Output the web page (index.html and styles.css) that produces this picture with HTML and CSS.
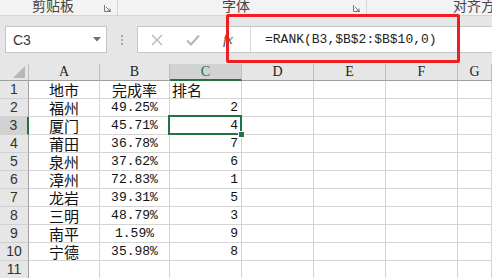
FILE: index.html
```html
<!DOCTYPE html>
<html lang="zh-CN">
<head>
    <meta charset="UTF-8">
    <title>RANK</title>
    <link rel="stylesheet" href="styles.css">
</head>
<body>
    <!-- ribbon group labels -->
    <div class="ribbon">
        <div class="group g-clip">
            <span class="label">剪贴板</span>
            <svg class="launcher" width="7" height="7" viewBox="0 0 7 7"><path d="M0.5 0 V6.5 H7 M2 2 L6 6 M6 3.5 V6 H3.5" fill="none" stroke="#7a7a7a" stroke-width="1"/></svg>
        </div>
        <div class="group g-font">
            <span class="label">字体</span>
            <svg class="launcher" width="7" height="7" viewBox="0 0 7 7"><path d="M0.5 0 V6.5 H7 M2 2 L6 6 M6 3.5 V6 H3.5" fill="none" stroke="#7a7a7a" stroke-width="1"/></svg>
        </div>
        <div class="group g-align">
            <span class="label">对齐方式</span>
        </div>
    </div>

    <!-- formula bar -->
    <div class="fbar">
        <div class="namebox">
            <span>C3</span>
            <svg width="8" height="5" viewBox="0 0 8 5"><path d="M0 0 H8 L4 4.5 Z" fill="#6f6f6f"/></svg>
        </div>
        <div class="grip"><i></i><i></i><i></i></div>
        <div class="formula">
            <div class="btns">
                <svg width="12" height="12" viewBox="0 0 12 12"><path d="M1 1 L11 11 M11 1 L1 11" stroke="#b4b4b4" stroke-width="1.3"/></svg>
                <svg width="14" height="12" viewBox="0 0 14 12"><path d="M1 6.5 L5 10.5 L13 1.5" fill="none" stroke="#b4b4b4" stroke-width="2"/></svg>
                <span class="fx">fx</span>
            </div>
            <div class="ftext">=RANK(B3,$B$2:$B$10,0)</div>
        </div>
        <div class="mark"></div>
    </div>

    <!-- worksheet -->
    <div class="sheet">
        <div class="corner"><svg width="12" height="12" viewBox="0 0 12 12"><path d="M12 0 V12 H0 Z" fill="#b8b8b8"/></svg></div>
        <div class="ch">A</div><div class="ch">B</div><div class="ch active">C</div><div class="ch">D</div><div class="ch">E</div><div class="ch">F</div><div class="ch">G</div>

        <div class="rh">1</div><div class="c ctr zh">地市</div><div class="c ctr zh">完成率</div><div class="c zh">排名</div><div class="c"></div><div class="c"></div><div class="c"></div><div class="c"></div>
        <div class="rh">2</div><div class="c ctr zh">福州</div><div class="c ctr">49.25%</div><div class="c num">2</div><div class="c"></div><div class="c"></div><div class="c"></div><div class="c"></div>
        <div class="rh active">3</div><div class="c ctr zh">厦门</div><div class="c ctr">45.71%</div><div class="c num sel">4</div><div class="c"></div><div class="c"></div><div class="c"></div><div class="c"></div>
        <div class="rh">4</div><div class="c ctr zh">莆田</div><div class="c ctr">36.78%</div><div class="c num">7</div><div class="c"></div><div class="c"></div><div class="c"></div><div class="c"></div>
        <div class="rh">5</div><div class="c ctr zh">泉州</div><div class="c ctr">37.62%</div><div class="c num">6</div><div class="c"></div><div class="c"></div><div class="c"></div><div class="c"></div>
        <div class="rh">6</div><div class="c ctr zh">漳州</div><div class="c ctr">72.83%</div><div class="c num">1</div><div class="c"></div><div class="c"></div><div class="c"></div><div class="c"></div>
        <div class="rh">7</div><div class="c ctr zh">龙岩</div><div class="c ctr">39.31%</div><div class="c num">5</div><div class="c"></div><div class="c"></div><div class="c"></div><div class="c"></div>
        <div class="rh">8</div><div class="c ctr zh">三明</div><div class="c ctr">48.79%</div><div class="c num">3</div><div class="c"></div><div class="c"></div><div class="c"></div><div class="c"></div>
        <div class="rh">9</div><div class="c ctr zh">南平</div><div class="c ctr">1.59%</div><div class="c num">9</div><div class="c"></div><div class="c"></div><div class="c"></div><div class="c"></div>
        <div class="rh">10</div><div class="c ctr zh">宁德</div><div class="c ctr">35.98%</div><div class="c num">8</div><div class="c"></div><div class="c"></div><div class="c"></div><div class="c"></div>
        <div class="rh">11</div><div class="c"></div><div class="c"></div><div class="c"></div><div class="c"></div><div class="c"></div><div class="c"></div><div class="c"></div>
    </div>
</body>
</html>
```

FILE: styles.css
```css
* {
    box-sizing: border-box;
}

body {
    margin: 0;
    width: 492px;
    height: 278px;
    overflow: hidden;
    background: #ffffff;
    font-family: "Noto Sans CJK SC", sans-serif;
}

/* ribbon */
.ribbon {
    display: flex;
    height: 16px;
    background: #f3f3f3;
    border-bottom: 1px solid #d6d6d6;
    overflow: hidden;
}

.group {
    position: relative;
    flex-shrink: 0;
    height: 15px;
    border-right: 1px solid #d6d6d6;
}

.g-clip {
    width: 118px;
}

.g-font {
    width: 249px;
}

.g-align {
    flex: 1;
    min-width: 0;
    overflow: hidden;
    border-right: none;
}

.label {
    display: block;
    margin-top: -2px;
    font-size: 14px;
    line-height: 14px;
    color: #444444;
    white-space: nowrap;
}

.g-clip .label {
    padding-left: 32px;
}

.g-font .label {
    padding-left: 104px;
}

.g-align .label {
    padding-left: 86px;
}

.launcher {
    position: absolute;
    top: 5px;
    right: 6px;
}

/* formula bar */
.fbar {
    position: relative;
    display: flex;
    align-items: center;
    height: 48px;
    padding: 10px 0 11px 5px;
    background: #e6e6e6;
}

.namebox {
    display: flex;
    align-items: center;
    justify-content: space-between;
    width: 102px;
    height: 27px;
    padding: 0 5px 0 7px;
    background: #ffffff;
    border: 1px solid #c6c6c6;
    font-family: "Liberation Sans", sans-serif;
    font-size: 14px;
    color: #3a3a3a;
}

.grip {
    display: flex;
    flex-direction: column;
    gap: 2px;
    width: 30px;
    align-items: center;
}

.grip i {
    width: 2px;
    height: 2px;
    background: #a9a9a9;
}

.formula {
    display: flex;
    flex: 1;
    height: 27px;
    background: #ffffff;
    border: 1px solid #c6c6c6;
    border-right: none;
}

.btns {
    display: flex;
    align-items: center;
    gap: 23px;
    width: 113px;
    padding-left: 13px;
    border-right: 1px solid #d8d8d8;
}

.fx {
    font-family: "Liberation Serif", serif;
    font-style: italic;
    font-size: 15px;
    color: #555555;
    letter-spacing: -1px;
}

.ftext {
    padding-left: 14px;
    font-family: "Liberation Mono", monospace;
    font-size: 13px;
    line-height: 25px;
    color: #222222;
    white-space: nowrap;
}

.mark {
    position: absolute;
    left: 226px;
    top: -2px;
    width: 234px;
    height: 49px;
    border: 3px solid #f01e1e;
    border-radius: 2px;
}

/* worksheet */
.sheet {
    display: grid;
    grid-template-columns: 29px 71px 70px 72px 72px 72px 72px 1fr;
    grid-template-rows: 17px repeat(11, 18px);
    font-family: "Liberation Mono", "Noto Sans CJK SC", monospace;
    font-size: 13px;
    color: #111111;
}

.corner {
    display: flex;
    align-items: flex-end;
    justify-content: flex-end;
    padding: 0 3px 2px 0;
    background: #e6e6e6;
    border-right: 1px solid #bdbdbd;
    border-bottom: 1px solid #9e9e9e;
}

.ch {
    background: #e6e6e6;
    border-right: 1px solid #bdbdbd;
    border-bottom: 1px solid #9e9e9e;
    font-family: "Liberation Serif", serif;
    font-size: 14px;
    line-height: 16px;
    text-align: center;
    color: #222222;
}

.ch.active {
    background: #d2d2d2;
    color: #217346;
    border-bottom: 2px solid #217346;
}

.rh {
    background: #e6e6e6;
    border-right: 1px solid #9e9e9e;
    border-bottom: 1px solid #d0d0d0;
    font-family: "Liberation Sans", sans-serif;
    font-size: 14px;
    line-height: 17px;
    text-align: center;
    color: #333333;
}

.rh.active {
    background: #d2d2d2;
    border-right: 2px solid #217346;
}

.c {
    border-right: 1px solid #d4d4d4;
    border-bottom: 1px solid #d4d4d4;
    line-height: 17px;
    padding: 0 3px;
    white-space: nowrap;
}

.c.zh {
    font-family: "Noto Sans CJK SC", sans-serif;
    font-size: 15px;
    padding-left: 2px;
}

.ctr {
    text-align: center;
}

.c.ctr.zh {
    padding-left: 3px;
}

.num {
    text-align: right;
}

.sel {
    position: relative;
}

.sel::before {
    content: "";
    position: absolute;
    left: -2px;
    top: -2px;
    right: -1px;
    bottom: -1px;
    border: 2px solid #217346;
}

.sel::after {
    content: "";
    position: absolute;
    right: -4px;
    bottom: -4px;
    width: 5px;
    height: 5px;
    background: #217346;
    border: 1px solid #ffffff;
}
```
